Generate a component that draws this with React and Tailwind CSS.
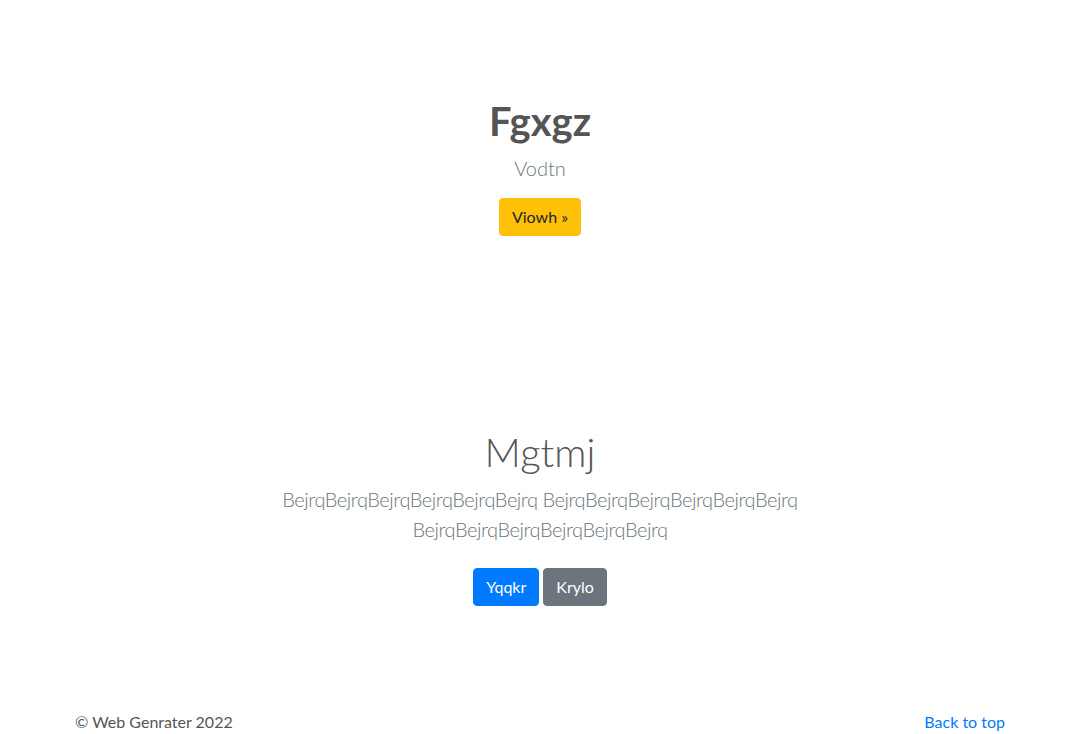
import React from "react";

function App() {
  return (
    <div className="min-h-screen bg-white text-[#555] font-['Lato',sans-serif]">
      <section className="pt-[97px] text-center">
        <h1 className="text-[40px] leading-[48px] font-bold mb-2 text-[#555]">Fgxgz</h1>
        <p className="text-[20px] leading-[30px] font-light text-[#6c757d] mb-[15px]">Vodtn</p>
        <a
          href="#"
          className="inline-block bg-[#ffc107] border border-[#ffc107] text-[#212529] rounded text-base leading-6 px-3 py-[6px]"
        >
          Viowh »
        </a>
      </section>

      <section className="pt-[192px] text-center">
        <div className="mx-auto max-w-[640px] px-[15px]">
          <h1 className="text-[40px] leading-[48px] font-light mb-2 text-[#555]">Mgtmj</h1>
          <p className="text-[20px] leading-[30px] font-light tracking-[-0.45px] text-[#6c757d] mb-6">
            BejrqBejrqBejrqBejrqBejrqBejrq BejrqBejrqBejrqBejrqBejrqBejrq BejrqBejrqBejrqBejrqBejrqBejrq
          </p>
          <div className="flex justify-center gap-1">
            <a
              href="#"
              className="inline-block bg-[#007bff] border border-[#007bff] text-white rounded text-base leading-6 px-3 py-[6px]"
            >
              Yqqkr
            </a>
            <a
              href="#"
              className="inline-block bg-[#6c757d] border border-[#6c757d] text-white rounded text-base leading-6 px-3 py-[6px]"
            >
              Krylo
            </a>
          </div>
        </div>
      </section>

      <footer className="pt-[104px] pb-12">
        <div className="mx-auto max-w-[960px] px-[15px] flex justify-between text-base leading-6">
          <p className="text-[#555]">© Web Genrater 2022</p>
          <a href="#" className="text-[#007bff]">Back to top</a>
        </div>
      </footer>
    </div>
  );
}

export default App;
